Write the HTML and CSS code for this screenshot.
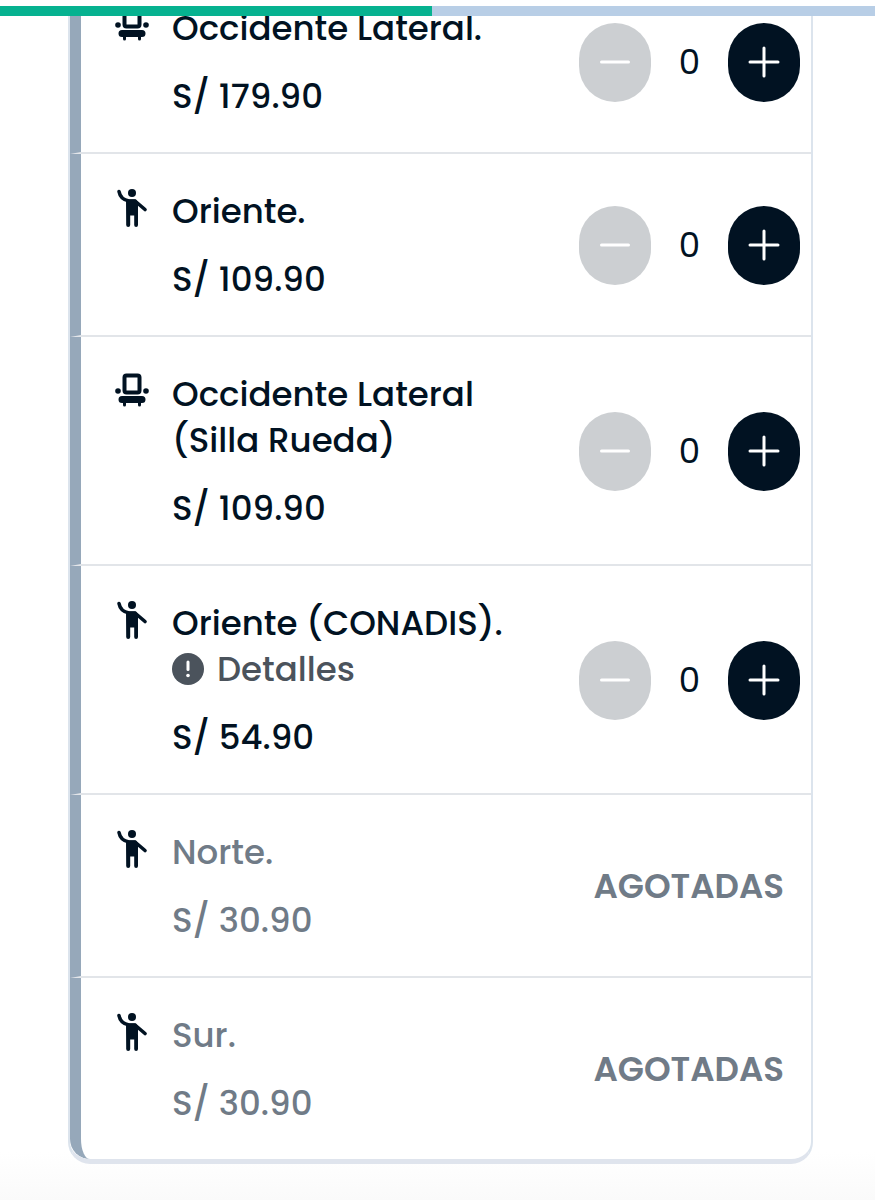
FILE: index.html
```html
<!DOCTYPE html>
<html lang="es">

<head>
    <meta charset="UTF-8">
    <meta name="viewport" content="width=device-width, initial-scale=1.0">
    <title>Entradas</title>
    <link rel="stylesheet" href="styles.css">
</head>

<body>
    <svg class="none">
        <symbol id="seat" viewBox="0 0 36 40">
            <rect x="9.500" y="4.500" width="15" height="17" rx="2" fill="none" stroke="currentColor" stroke-width="4" />
            <circle cx="3" cy="20" r="2.800" />
            <circle cx="31" cy="20" r="2.800" />
            <path d="M7 25h20a3.500 3.500 0 0 1 0 7h-1v2a1.500 1.500 0 0 1-3 0v-2H11v2a1.500 1.500 0 0 1-3 0v-2H7a3.500 3.500 0 0 1 0-7z" />
        </symbol>
        <symbol id="person" viewBox="0 0 36 40">
            <circle cx="17" cy="5" r="4" />
            <path d="M4 3.500C5 9 8 12 14 13h6l10 8.500" fill="none" stroke="currentColor" stroke-width="3.600" stroke-linecap="round" stroke-linejoin="round" />
            <path d="M11 11.500h10l2 3V37a1.900 1.900 0 0 1-3.800 0V27.500h-4V37a1.900 1.900 0 0 1-4 0z" />
        </symbol>
        <symbol id="minus" viewBox="0 0 32 32">
            <path d="M2.500 16h27" fill="none" stroke="currentColor" stroke-width="3" stroke-linecap="round" />
        </symbol>
        <symbol id="plus" viewBox="0 0 32 32">
            <path d="M2 16h28M16 2v28" fill="none" stroke="currentColor" stroke-width="3" stroke-linecap="round" />
        </symbol>
    </svg>

    <div class="progress" role="progressbar" aria-label="Progreso" aria-valuenow="49">
        <div class="progress-bar" style="width:49.4%"></div>
    </div>

    <main class="page">
        <ul class="zones">
            <li class="zone">
                <svg class="icon"><use href="#seat" /></svg>
                <div class="info">
                    <div class="name">Occidente Lateral.</div>
                    <div class="price">S/ 179.90</div>
                </div>
                <div class="counter">
                    <button class="btn" aria-label="Quitar" disabled><svg><use href="#minus" /></svg></button>
                    <output class="count">0</output>
                    <button class="btn" aria-label="Agregar"><svg><use href="#plus" /></svg></button>
                </div>
            </li>
            <li class="zone">
                <svg class="icon"><use href="#person" /></svg>
                <div class="info">
                    <div class="name">Oriente.</div>
                    <div class="price">S/ 109.90</div>
                </div>
                <div class="counter">
                    <button class="btn" aria-label="Quitar" disabled><svg><use href="#minus" /></svg></button>
                    <output class="count">0</output>
                    <button class="btn" aria-label="Agregar"><svg><use href="#plus" /></svg></button>
                </div>
            </li>
            <li class="zone">
                <svg class="icon"><use href="#seat" /></svg>
                <div class="info">
                    <div class="name">Occidente Lateral (Silla Rueda)</div>
                    <div class="price">S/ 109.90</div>
                </div>
                <div class="counter">
                    <button class="btn" aria-label="Quitar" disabled><svg><use href="#minus" /></svg></button>
                    <output class="count">0</output>
                    <button class="btn" aria-label="Agregar"><svg><use href="#plus" /></svg></button>
                </div>
            </li>
            <li class="zone">
                <svg class="icon"><use href="#person" /></svg>
                <div class="info">
                    <div class="name">Oriente (CONADIS).</div>
                    <button class="details">
                        <svg viewBox="0 0 32 32">
                            <circle cx="16" cy="16" r="16" fill="currentColor" />
                            <path d="M16 9v7.500" stroke="#fff" stroke-width="3" stroke-linecap="round" />
                            <circle cx="16" cy="22.500" r="1.800" fill="#fff" />
                        </svg>
                        Detalles
                    </button>
                    <div class="price">S/ 54.90</div>
                </div>
                <div class="counter">
                    <button class="btn" aria-label="Quitar" disabled><svg><use href="#minus" /></svg></button>
                    <output class="count">0</output>
                    <button class="btn" aria-label="Agregar"><svg><use href="#plus" /></svg></button>
                </div>
            </li>
            <li class="zone sold-out">
                <svg class="icon"><use href="#person" /></svg>
                <div class="info">
                    <div class="name">Norte.</div>
                    <div class="price">S/ 30.90</div>
                </div>
                <div class="status">AGOTADAS</div>
            </li>
            <li class="zone sold-out">
                <svg class="icon"><use href="#person" /></svg>
                <div class="info">
                    <div class="name">Sur.</div>
                    <div class="price">S/ 30.90</div>
                </div>
                <div class="status">AGOTADAS</div>
            </li>
        </ul>
    </main>
</body>

</html>
```
FILE: styles.css
```css
* {
    box-sizing: border-box;
}

body {
    margin: 0;
    min-height: 100vh;
    overflow: hidden;
    background: #fff;
    color: #011222;
    font-family: Poppins, Inter, sans-serif;
    font-size: 34px;
    font-weight: 500;
    line-height: 46px;
}

button {
    padding: 0;
    border: none;
    font: inherit;
    cursor: pointer;
}

.none {
    display: none;
}

.progress {
    position: fixed;
    top: 0;
    left: 0;
    right: 0;
    z-index: 1;
    height: 16px;
    border-top: 6px solid #fff;
    background-color: #b8cee6;
}

.progress-bar {
    height: 100%;
    background-color: #06b290;
}

/* the list is scrolled a little under the progress bar */
.page {
    margin-top: -29px;
    padding: 0 62px 36px 68px;
    background: linear-gradient(to top, #fafafa, #fff 48px);
}

.zones {
    margin: 0;
    padding: 0;
    list-style: none;
    background-color: #fff;
    border: 2px solid #dce4ed;
    border-top: none;
    border-bottom: 5px solid #dfe4ed;
    border-radius: 0 0 22px 22px;
    overflow: hidden;
}

.zone {
    display: flex;
    align-items: center;
    padding: 34px 11px 33px 34px;
    border-left: 11px solid #96a8ba;
    border-bottom: 2px solid #e2e5e9;
}

.zone:last-child {
    border-bottom: none;
    border-bottom-left-radius: 20px;
}

.icon {
    align-self: flex-start;
    flex: none;
    width: 36px;
    height: 40px;
    margin-right: 21px;
    fill: currentColor;
}

.info {
    flex: 1;
}

.name {
    max-width: 360px;
}

.price {
    margin-top: 22px;
}

.details {
    display: flex;
    align-items: center;
    gap: 13px;
    background: none;
    color: #4b535c;
}

.details svg {
    width: 32px;
    height: 32px;
}

.counter {
    display: flex;
    align-items: center;
}

.btn {
    display: flex;
    justify-content: center;
    align-items: center;
    width: 72px;
    height: 79px;
    border-radius: 36px;
    background-color: #011222;
    color: #fff;
}

.btn:disabled {
    background-color: #cccfd2;
    cursor: default;
}

.btn svg {
    width: 32px;
    height: 32px;
}

.count {
    width: 77px;
    text-align: center;
    font-weight: 400;
}

.sold-out .info,
.status {
    color: #707b87;
}

.status {
    padding-right: 16px;
    font-weight: 600;
}
```
